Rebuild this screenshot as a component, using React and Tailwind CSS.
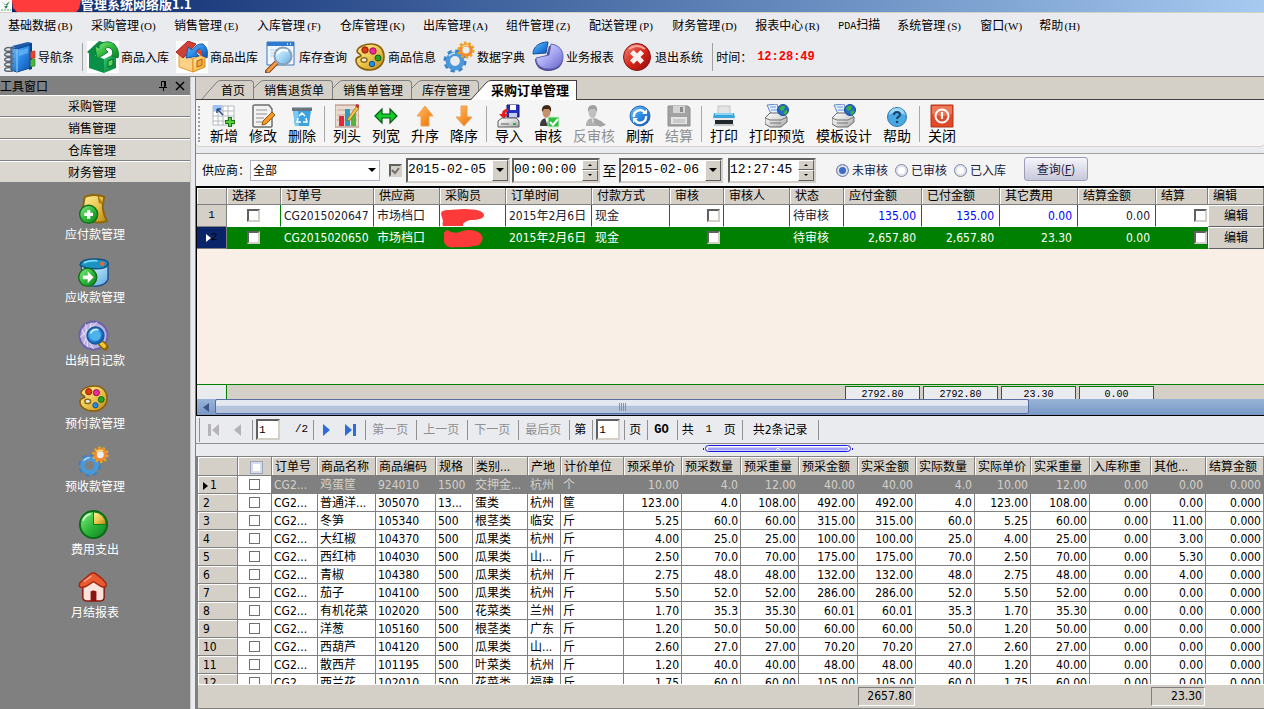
import React from "react";

const SANS = "font-['DejaVu_Sans_Condensed','Noto_Sans','Noto_Sans_CJK_SC',sans-serif]";
const CJK = "font-['Noto_Sans_CJK_SC',sans-serif]";
const MONO = "font-['Liberation_Mono','Noto_Sans_CJK_SC',monospace]";
const SERIF = "font-['Liberation_Serif','Noto_Sans_CJK_SC',serif]";

/* ---------- shared gradients ---------- */
function Gradients() {
  const g = (id, a, b, c) => (
    <linearGradient id={id} x1="0" y1="0" x2="1" y2="1">
      <stop offset="0" stopColor={a} />
      <stop offset="0.5" stopColor={b} />
      <stop offset="1" stopColor={c} />
    </linearGradient>
  );
  return (
    <svg className="absolute size-0" aria-hidden="true">
      <defs>
        {g("blue", "#7cc4fb", "#2b8be6", "#0f4fae")}
        {g("green", "#8ff08a", "#2fb93a", "#0b7d22")}
        {g("teal", "#3fd07c", "#17a04c", "#067a34")}
        {g("gold", "#fff3a0", "#ecc850", "#b98212")}
        {g("orange", "#ffc27a", "#f79630", "#e36f0c")}
        {g("lilac", "#e6e6ff", "#a9a9f2", "#6464c8")}
        {g("red", "#f28a7c", "#d8281c", "#8e0b08")}
        {g("cream", "#fff4cf", "#fbc860", "#f09a30")}
        {g("silver", "#ffffff", "#dcdcdc", "#a0a0a0")}
        {g("glass", "#f0fbff", "#a9d8f5", "#5ba9e0")}
      </defs>
    </svg>
  );
}

/* ---------- icons ---------- */
const Notebook = (p) => (
  <svg viewBox="0 0 32 32" {...p}>
    <path d="M8 5 24 1l4 1v4L13 8z" fill="#1d5cab" />
    <path d="M25 3l3-1v26l-3 1z" fill="#123f80" />
    <path d="M25 11l6-1v7l-6 1z" fill="#e8452a" stroke="#a82810" strokeWidth=".6" />
    <path d="M25 19l6-1v7l-6 1z" fill="#4cb83a" stroke="#24801c" strokeWidth=".6" />
    <path d="M7 6l6 2 13-4v23l-13 4-6-2z" fill="url(#blue)" stroke="#0d4794" />
    <path d="M13 8v23" stroke="#9ad0fb" />
    <path d="M15 10l9-3v5l-9 3z" fill="#7cc0f8" opacity=".6" />
    {[8, 13, 18, 23, 28].map((y) => (
      <path key={y} d={`M10 ${y}q-7-3-9 0t8 2`} fill="none" stroke="#5d6570" strokeWidth="1.4" />
    ))}
  </svg>
);
const BoxIn = (p) => (
  <svg viewBox="0 0 32 32" {...p}>
    <path fill="#fff" d="M0 0h32v32H0z" />
    <path d="M2 12 17 18v14L2 27z" fill="#079048" />
    <path d="M17 18l12-6v15l-12 5z" fill="url(#teal)" />
    <path d="M0 11 12 0l8 2L7 16z" fill="#0a8a42" />
    <path d="M12 4q8-6 15-1 6 6 4 14l-6-2q2-6-2-8-3-2-5 1l3 3-11 7-2-13 4 2z" fill="url(#green)" stroke="#0a8038" />
    <path d="M21 20l5-2v6l-5 2z" fill="#5fd65b" stroke="#056a2c" />
  </svg>
);
const BoxOut = (p) => (
  <svg viewBox="0 0 32 32" {...p}>
    <path fill="#fff" d="M0 0h32v32H0z" />
    <path d="M3 12 17 18v13L3 26z" fill="#fbd186" stroke="#e69a30" />
    <path d="M17 18l12-6v14l-12 5z" fill="url(#cream)" stroke="#d88a22" />
    <path d="M0 11 12 0l8 3L7 17z" fill="#d04036" stroke="#a5251e" />
    <path d="M22 7 31 14l-4 2-7-5z" fill="#e2472c" />
    <path d="M10 17 12 6l4 3q5-7 11-6 6 4 4 14l-5-3q1-6-3-6-2 0-3 4l3 3z" fill="url(#blue)" stroke="#1b57a8" />
    <path d="M21 20l5-2v6l-5 2z" fill="#f6a93c" stroke="#a9660e" />
  </svg>
);
const WindowSearch = (p) => (
  <svg viewBox="0 0 32 32" {...p}>
    <path d="M2 1h27v23H2z" fill="#eef5fc" stroke="#3b78b8" />
    <path d="M2 1h27v4H2z" fill="#2c7bd0" />
    <path d="M22 3h1M25 3h1" stroke="#fff" strokeWidth="1.5" />
    <path d="M5 9h7M5 12h5M5 15h4" stroke="#b9cfe4" />
    <path d="M12 21 2 31" stroke="#8a4a1c" strokeWidth="5" strokeLinecap="round" />
    <path d="M12 21 3 30" stroke="#f29a4c" strokeWidth="3" strokeLinecap="round" />
    <circle cx="18" cy="15" r="8.5" fill="url(#glass)" stroke="#8aa0b5" strokeWidth="2" />
    <path d="M12 13q4-6 11-3" stroke="#fff" strokeWidth="2" fill="none" />
  </svg>
);
const Palette = (p) => (
  <svg viewBox="0 0 32 32" {...p}>
    <path
      d="M17 3c9 0 13 6 13 13s-6 13-14 13S2 25 2 19c0-3 3-3 5-4 1-2-4-2-4-5 1-4 7-7 14-7z"
      fill="url(#gold)"
      stroke="#8a5f0a"
      strokeWidth="1.6"
    />
    <circle cx="11" cy="9" r="3.2" fill="#dc3c16" stroke="#8e1c06" />
    <circle cx="19" cy="10" r="3.2" fill="#ee2c96" stroke="#97125a" />
    <circle cx="24" cy="17" r="3" fill="#27a32a" stroke="#0f6414" />
    <circle cx="18" cy="23" r="2.700" fill="#1f8fe6" stroke="#0f5296" />
    <ellipse cx="10" cy="19" rx="3" ry="2.2" fill="#f4f0e0" stroke="#8a6a1c" strokeWidth="1.5" />
  </svg>
);
const Gears = (p) => (
  <svg viewBox="0 0 32 32" {...p}>
    <circle cx="12" cy="20" r="10.2" fill="none" stroke="#3a80c4" strokeWidth="2.800" strokeDasharray="4.400 3.610" />
    <circle cx="12" cy="20" r="7.2" fill="none" stroke="#4b98d8" strokeWidth="4.600" />
    <path d="M6 15a8 8 0 0 1 6-3" stroke="#b8defa" strokeWidth="1.500" fill="none" />
    <circle cx="23" cy="9" r="7.400" fill="none" stroke="#e9a818" strokeWidth="2.400" strokeDasharray="2.600 2.050" />
    <circle cx="23" cy="9" r="5.200" fill="#e8f0f6" stroke="#f58a2c" strokeWidth="3.200" />
    <path d="M19 6q3-3 7-1" stroke="#ffe27a" strokeWidth="1.300" fill="none" />
  </svg>
);
const Pie = (p) => (
  <svg viewBox="0 0 32 32" {...p}>
    <path d="M17 5c9 0 14 6 14 13s-6 12-15 12C8 30 3 25 3 18l11-2z" fill="#4c4c8e" />
    <path d="M19 3c8 1 12 6 12 13s-6 12-14 12S4 24 4 17l13-3z" fill="url(#lilac)" stroke="#6464b8" />
    <path d="M1 13C1 6 7 1 16 1l-2 11z" fill="url(#blue)" stroke="#134d9c" />
  </svg>
);
const Exit = (p) => (
  <svg viewBox="0 0 32 32" {...p}>
    <circle cx="16" cy="16" r="13.500" fill="url(#red)" stroke="#8a1410" />
    <path d="M8 8q8-6 16 0" stroke="#f6a69c" strokeWidth="2" fill="none" />
    <path d="M12.500 12.500l7 7M19.500 12.500l-7 7" stroke="#fff2ee" strokeWidth="5" strokeLinecap="square" />
  </svg>
);
const PageAdd = (p) => (
  <svg viewBox="0 0 32 32" {...p}>
    <path d="M7 3q10-4 20 0l-1 6q-1 3 0 8 1 6 4 11-9 3-19 0L4 20z" fill="url(#gold)" stroke="#8f6608" strokeWidth="2" />
    <path d="M21 2l1 7 5 1" fill="#b98c1c" stroke="#8f6608" />
    <circle cx="11" cy="21" r="9.300" fill="url(#green)" stroke="#10701a" strokeWidth="1.500" />
    <path d="M11 16.500v9M6.500 21h9" stroke="#fff" strokeWidth="3.400" />
  </svg>
);
const BinGo = (p) => (
  <svg viewBox="0 0 32 32" {...p}>
    <path d="M3 6l2 19q6 6 15 5 9-1 11-7V6z" fill="url(#glass)" stroke="#1c4f8c" strokeWidth="1.500" />
    <path d="M2 8q2-6 14-6 14 0 15 4 0 5-8 6-16 1-21-4z" fill="#1b93c4" stroke="#125080" strokeWidth="1.500" />
    <path d="M6 6q6-3 14-2" stroke="#7cdcf4" strokeWidth="2" fill="none" />
    <circle cx="25" cy="7" r="2.300" fill="#f0642c" />
    <circle cx="10" cy="21" r="9.300" fill="url(#green)" stroke="#10701a" strokeWidth="1.500" />
    <path d="M5 19h5v-4l6 6-6 6v-4H5z" fill="#fff" />
  </svg>
);
const GlobeSearch = (p) => (
  <svg viewBox="0 0 32 32" {...p}>
    <circle cx="16" cy="16" r="14.500" fill="#b9aee0" stroke="#6a5fa8" strokeWidth="2" />
    <path d="M4 10l12 20M2 18 20 2M8 4l2 24M14 3l-8 22" stroke="#efe4fb" fill="none" />
    <path d="M24 24l4 4" stroke="#8f6608" strokeWidth="7" strokeLinecap="round" />
    <path d="M24 24l3 3" stroke="#f4c630" strokeWidth="4" strokeLinecap="round" />
    <circle cx="18" cy="16" r="8.500" fill="url(#blue)" stroke="#125a9c" strokeWidth="2" />
    <circle cx="18" cy="16" r="5.500" fill="#4db4ea" />
    <path d="M13 14q2-5 8-4" stroke="#d8f4ff" strokeWidth="1.500" fill="none" />
  </svg>
);
const PieGreen = (p) => (
  <svg viewBox="0 0 32 32" {...p}>
    <circle cx="16" cy="16" r="14" fill="url(#green)" stroke="#0b6a16" strokeWidth="2" />
    <path d="M16 16V3a13 13 0 0 1 13 13z" fill="url(#gold)" stroke="#0f7a1a" />
    <path d="M5 12q3-6 8-7" stroke="#c8ffc4" strokeWidth="2" fill="none" />
  </svg>
);
const House = (p) => (
  <svg viewBox="0 0 32 32" {...p}>
    <path d="M5 14l11-8 11 8v12q0 4-5 4H10q-5 0-5-4z" fill="#fbe3dc" stroke="#8c1410" strokeWidth="1.500" />
    <path d="M14 1 2 11q-2 5 2 5l4-1 8-5 8 5q6 2 5-3-2-4-12-11z" fill="#e85a30" stroke="#a8260f" strokeWidth="1.500" />
    <path d="M6 10l8-6" stroke="#ffa080" strokeWidth="1.500" />
    <path d="M13 20q3-2 6 0v10h-6z" fill="#8c1410" />
  </svg>
);

const GridAdd = (p) => (
  <svg viewBox="0 0 24 24" {...p}>
    <path d="M1 2h21v19H1z" fill="#fff" stroke="#b4b8c0" />
    <path d="M1 7h21M1 12h21M1 17h21M6 2v19M11 2v19M16 2v19" stroke="#b4b8c0" />
    <path d="M1 1h9v6H1z" fill="#9cc4f8" />
    <path d="M5 5l6 6M5 5v4M5 5h4" stroke="#2c4c80" strokeWidth="1.500" fill="none" />
    <path d="M18 13v10M13 18h10" stroke="#1c7a1c" strokeWidth="4" />
    <path d="M18 14v8M14 18h8" stroke="#5cd03c" strokeWidth="2" />
  </svg>
);
const Edit = (p) => (
  <svg viewBox="0 0 24 24" {...p}>
    <path d="M2 2q0-1 2-1h14l3 4v17q0 1-1 1H3q-1 0-1-1z" fill="#f2f2f2" stroke="#6c6c6c" strokeWidth="1.500" />
    <path d="M5 6h11M5 10h11M5 14h8M5 18h6" stroke="#909090" />
    <path d="M21 8l3 3-9 9-4 1 1-4z" fill="#f59a24" stroke="#9a5408" />
  </svg>
);
const Trash = (p) => (
  <svg viewBox="0 0 24 24" {...p}>
    <path d="M3 6h18l-2 16H5z" fill="#3ba4e0" />
    <path d="M3 6h5l1 16H5z" fill="#7cc8f0" />
    <path d="M2 3h20v4H2z" fill="#6a7480" />
    <path d="M2 3h20v1H2z" fill="#a8b4c0" />
    <path d="M9 12l3-3 3 3M8 14l-1 4h4M16 14l1 4h-4" stroke="#fff" strokeWidth="1.500" fill="none" />
  </svg>
);
const Bars = (p) => (
  <svg viewBox="0 0 24 24" {...p}>
    <path d="M0 1h24v22H0z" fill="#eadbd0" stroke="#a88470" />
    <path d="M2 6h20M2 11h20M2 16h20" stroke="#c8a890" />
    <path d="M4 12h5v10H4z" fill="#e0283c" />
    <path d="M10 5h5v17h-5z" fill="#2c9cc0" />
    <path d="M16 9h5v13h-5z" fill="#54b43c" />
    <path d="M13 14l9-12 2 2-9 12-3 1z" fill="#ecc850" stroke="#9c6c10" strokeWidth=".8" />
    <path d="M21 1l3 2" stroke="#d03030" strokeWidth="3" />
  </svg>
);
const Wide = (p) => (
  <svg viewBox="0 0 24 24" {...p}>
    <path d="M1 12l7-7v5h8V5l7 7-7 7v-5H8v5z" fill="#14cc2c" stroke="#0b5c14" strokeWidth="1.200" />
  </svg>
);
const Up = (p) => (
  <svg viewBox="0 0 24 24" {...p}>
    <path d="M12 2l8 10h-4v10H8V12H4z" fill="url(#orange)" stroke="#f0a050" />
  </svg>
);
const Down = (p) => (
  <svg viewBox="0 0 24 24" {...p}>
    <path d="M12 22l8-9h-5V2H9v11H4z" fill="url(#orange)" stroke="#f0a050" />
  </svg>
);
const Import = (p) => (
  <svg viewBox="0 0 24 24" {...p}>
    <path d="M10 1h12v12H10z" fill="#2430c4" stroke="#10186c" />
    <path d="M13 1h6v5h-6z" fill="#fff" />
    <path d="M12 9h8v4h-8z" fill="#c4ccf4" />
    <path d="M11 5q-6 0-6 5H2l5 5 4-5H8q0-2 3-2z" fill="#e81c1c" />
    <path d="M5 14h14l3 3v6H1v-6z" fill="url(#silver)" stroke="#5c5c5c" />
    <path d="M4 20h8" stroke="#5c5c5c" />
    <path d="M16 20h3" stroke="#2cb42c" strokeWidth="2" />
  </svg>
);
const Person = ({ muted, ...p }) => (
  <svg viewBox="0 0 24 24" {...p}>
    <path d="M4 22q0-8 7-8t9 8z" fill={muted ? "#b0b0b0" : "#3c3c40"} />
    <path d="M9 13h4l-2 7z" fill={muted ? "#dcdcdc" : "#fff"} />
    <ellipse cx="10.500" cy="8" rx="4" ry="6" fill={muted ? "#c0c0c0" : "#c89068"} />
    <path d="M6 8q-1-7 5-7 5 0 4 7l-2-3H8z" fill={muted ? "#a0a0a0" : "#3c2818"} />
    {muted ? (
      <path d="M11 14l8 3 5 4-6 2-5-4z" fill="#a4a4a4" />
    ) : (
      <g>
        <path d="M12 13h11v10H12z" fill="#30c040" stroke="#d0f0d0" />
        <path d="M14 18l3 3 5-6" stroke="#fff" strokeWidth="2" fill="none" />
      </g>
    )}
  </svg>
);
const Refresh = (p) => (
  <svg viewBox="0 0 24 24" {...p}>
    <circle cx="12" cy="12" r="10" fill="url(#blue)" stroke="#2a66b8" />
    <path d="M6 13a6 6 0 0 1 11-4M18 12a6 6 0 0 1-11 4" stroke="#fff" strokeWidth="2.400" fill="none" />
    <path d="M14 10h5V5zM10 14H5v5z" fill="#fff" />
  </svg>
);
const Save = (p) => (
  <svg viewBox="0 0 24 24" {...p}>
    <path d="M1 2h20l2 2v18H1z" fill="#a2a2a2" stroke="#8c8c8c" />
    <path d="M6 2h12v7H6z" fill="#d4d4d4" />
    <path d="M13 3h3v5h-3z" fill="#8a8a8a" />
    <path d="M4 13h16v7H4z" fill="#e4e4e4" />
    <path d="M6 16h12M6 18h12" stroke="#b0b0b0" />
  </svg>
);
const Printer = (p) => (
  <svg viewBox="0 0 24 24" {...p}>
    <path d="M6 2h12v8H6z" fill="#e4e4e4" stroke="#c4c4c4" />
    <path d="M2 9h20l1 5H1z" fill="#3ba6dc" />
    <path d="M3 9h18v2H3z" fill="#8cd4f4" />
    <path d="M1 14h22v3H1z" fill="#e8e8e8" />
    <path d="M3 16h18v4H3z" fill="#20262c" />
    <path d="M2 21h20" stroke="#c4c8cc" strokeWidth="2" />
  </svg>
);
const PrintWeb = (p) => (
  <svg viewBox="0 0 24 24" {...p}>
    <path d="M2 1l10-1 3 10H6z" fill="#e4f0fc" stroke="#6484c4" />
    <path d="M5 3h6M6 6h6" stroke="#6c98e0" />
    <path d="M0 14l5-5h13l4 4v5l-6 5H5l-5-3z" fill="url(#silver)" stroke="#6a6a6a" />
    <path d="M0 14l5 2h11l6-3M5 19h11" stroke="#707070" fill="none" />
    <circle cx="18" cy="6" r="5.500" fill="#2468c8" stroke="#1a4c94" />
    <path d="M14 4q3-3 6-2l-1 4-3 1zM18 8l4-2q1 3-2 5z" fill="#38b43c" />
  </svg>
);
const Help = (p) => (
  <svg viewBox="0 0 24 24" {...p}>
    <circle cx="12" cy="13" r="9.500" fill="#4aa8e4" stroke="#2c78b4" />
    <path d="M4 11q7-6 16 0-1-7-8-7t-8 7z" fill="#9cd8f8" />
    <path d="M9 11q0-3 3-3t3 3q0 1-2 2-1 1-1 2" stroke="#1c4468" strokeWidth="2" fill="none" />
    <circle cx="12" cy="18" r="1.300" fill="#1c4468" />
  </svg>
);
const Power = (p) => (
  <svg viewBox="0 0 24 24" {...p}>
    <path d="M1 1h22v22H1z" fill="#e04a28" stroke="#b43418" />
    <path d="M2 2h20v8q-10 4-20 0z" fill="#ec7858" />
    <circle cx="12" cy="12" r="6.500" fill="none" stroke="#fff" strokeWidth="2" />
    <path d="M12 8v7" stroke="#fff" strokeWidth="2.200" />
  </svg>
);

/* ---------- data ---------- */
const MENU = [
  ["基础数据", "(B)"], ["采购管理", "(O)"], ["销售管理", "(E)"], ["入库管理", "(F)"], ["仓库管理", "(K)"],
  ["出库管理", "(A)"], ["组件管理", "(Z)"], ["配送管理", "(P)"], ["财务管理", "(D)"], ["报表中心", "(R)"],
  ["扫描", "", "PDA"], ["系统管理", "(S)"], ["窗口", "(W)"], ["帮助", "(H)"],
];
const MAIN_TOOLS = [
  [BoxIn, "商品入库"], [BoxOut, "商品出库"], [WindowSearch, "库存查询"], [Palette, "商品信息"],
  [Gears, "数据字典"], [Pie, "业务报表"], [Exit, "退出系统"],
];
const SIDE_ITEMS = [
  [PageAdd, "应付款管理"], [BinGo, "应收款管理"], [GlobeSearch, "出纳日记款"], [Palette, "预付款管理"],
  [Gears, "预收款管理"], [PieGreen, "费用支出"], [House, "月结报表"],
];
const TOOLS = [
  [GridAdd, "新增"], [Edit, "修改"], [Trash, "删除"], null,
  [Bars, "列头"], [Wide, "列宽"], [Up, "升序"], [Down, "降序"], null,
  [Import, "导入"], [Person, "审核"], [Person, "反审核", true], [Refresh, "刷新"], [Save, "结算", true], null,
  [Printer, "打印"], [PrintWeb, "打印预览"], [PrintWeb, "模板设计"], [Help, "帮助"], null,
  [Power, "关闭"],
];
const ORDER_COLS = [
  ["", 30], ["选择", 54], ["订单号", 93], ["供应商", 66], ["采购员", 66], ["订单时间", 86], ["付款方式", 78],
  ["审核", 54], ["审核人", 66], ["状态", 54], ["应付金额", 78], ["已付金额", 78], ["其它费用", 78],
  ["结算金额", 78], ["结算", 52], ["编辑", 56],
];
const ORDERS = [
  { no: "CG2015020647", sums: ["135.00", "135.00", "0.00"] },
  { no: "CG2015020650", sums: ["2,657.80", "2,657.80", "23.30"], active: true },
];
const BLOTS = [
  "M1 9Q1 5 8 5L24 4Q43 4 44 10 44 15 30 15 24 17 23 19V21H3Q2 19 3 16z",
  "M4 6Q6 1 11 5 18 7 22 4 34 1 41 7 45 12 39 18 28 21 16 20 6 22 4 15z",
];
const ITEM_COLS = [
  ["订单号", 46], ["商品名称", 58], ["商品编码", 60], ["规格", 37], ["类别...", 55], ["产地", 33], ["计价单位", 63],
  ["预采单价", 58], ["预采数量", 59], ["预采重量", 58], ["预采金额", 59], ["实采金额", 58], ["实际数量", 59],
  ["实际单价", 56], ["实采重量", 59], ["入库称重", 61], ["其他...", 55], ["结算金额", 58],
];
const ITEMS = [
  ["鸡蛋筐", "924010", "1500", "交押金...", "杭州", "个", "10.00", "4.0", "12.00", "40.00", "0.00"],
  ["普通洋...", "305070", "13...", "蛋类", "杭州", "筐", "123.00", "4.0", "108.00", "492.00", "0.00"],
  ["冬笋", "105340", "500", "根茎类", "临安", "斤", "5.25", "60.0", "60.00", "315.00", "11.00"],
  ["大红椒", "104370", "500", "瓜果类", "杭州", "斤", "4.00", "25.0", "25.00", "100.00", "3.00"],
  ["西红柿", "104030", "500", "瓜果类", "山...", "斤", "2.50", "70.0", "70.00", "175.00", "5.30"],
  ["青椒", "104380", "500", "瓜果类", "杭州", "斤", "2.75", "48.0", "48.00", "132.00", "4.00"],
  ["茄子", "104100", "500", "瓜果类", "杭州", "斤", "5.50", "52.0", "52.00", "286.00", "0.00"],
  ["有机花菜", "102020", "500", "花菜类", "兰州", "斤", "1.70", "35.3", "35.30", "60.01", "0.00"],
  ["洋葱", "105160", "500", "根茎类", "广东", "斤", "1.20", "50.0", "50.00", "60.00", "0.00"],
  ["西葫芦", "104120", "500", "瓜果类", "山...", "斤", "2.60", "27.0", "27.00", "70.20", "0.00"],
  ["散西芹", "101195", "500", "叶菜类", "杭州", "斤", "1.20", "40.0", "40.00", "48.00", "0.00"],
  ["西兰花", "102010", "500", "花菜类", "福建", "斤", "1.75", "60.0", "60.00", "105.00", "0.00"],
];

/* ---------- small controls ---------- */
const SUNKEN = "border-2 border-t-[#606060] border-l-[#606060] border-r-[#d4d0c8] border-b-[#d4d0c8]";
const RAISED = "border border-t-white border-l-white border-r-[#606060] border-b-[#606060] bg-[#d4d0c8]";

const Check = ({ label }) => (
  <input type="checkbox" aria-label={label} className={`block size-[13px] appearance-none bg-white ${SUNKEN}`} />
);
const FlatCheck = ({ label }) => (
  <input type="checkbox" aria-label={label} className="mx-auto block size-[11px] appearance-none border border-[#707070] bg-white" />
);
const Tri = ({ down, className }) => (
  <svg viewBox="0 0 8 4" className={className} aria-hidden="true">
    <path d={down ? "M0 0h8L4 4z" : "M0 4h8L4 0z"} fill="#000" />
  </svg>
);
function DateBox({ value, label }) {
  return (
    <div className={`flex h-[25px] w-[104px] shrink-0 bg-white ${SUNKEN}`}>
      <input aria-label={label} defaultValue={value} className={`min-w-0 flex-1 text-[13px] ${MONO}`} />
      <button type="button" aria-label={`${label} 下拉`} className={`flex w-4 items-center justify-center ${RAISED}`}>
        <Tri down className="h-1 w-2" />
      </button>
    </div>
  );
}
function TimeBox({ value, label }) {
  return (
    <div className={`flex h-[25px] w-[88px] shrink-0 bg-white ${SUNKEN}`}>
      <input aria-label={label} defaultValue={value} className={`min-w-0 flex-1 text-[13px] ${MONO}`} />
      <div className="flex w-4 flex-col">
        <button type="button" aria-label={`${label} 增加`} className={`flex flex-1 items-center justify-center ${RAISED}`}>
          <Tri className="h-0.5 w-1" />
        </button>
        <button type="button" aria-label={`${label} 减少`} className={`flex flex-1 items-center justify-center ${RAISED}`}>
          <Tri down className="h-0.5 w-1" />
        </button>
      </div>
    </div>
  );
}

/* ---------- header ---------- */
function Header() {
  return (
    <header className="shrink-0">
      <div className="flex h-3 items-start overflow-hidden bg-linear-to-r from-[#0a246a] to-[#a6caf0]">
        <svg viewBox="0 0 12 12" className="h-3 w-3 shrink-0 bg-white" aria-hidden="true">
          <path d="M1 1l4 4 5-4-3 5zM4 6l2 3 2-3" fill="#2a8a5a" />
          <path d="M1 10h10" stroke="#4ca070" strokeDasharray="2 1" />
        </svg>
        <svg viewBox="0 0 69 12" className="h-3 w-[69px] shrink-0" aria-hidden="true">
          <path d="M0 0h69l-2 9-3 3H5L1 8z" fill="#ff3b3b" />
        </svg>
        <h1 className="text-[13px] leading-[8px] font-bold whitespace-nowrap text-white">管理系统网络版1.1</h1>
      </div>
      <nav className="flex h-[26px] items-center gap-[17px] overflow-hidden border-t border-[#d4d0c8] pl-2 whitespace-nowrap">
        {MENU.map(([t, k, pre]) => (
          <button key={t + k} type="button" className="flex shrink-0 items-baseline leading-4">
            {pre && <span className={`text-[10px] ${MONO}`}>{pre}</span>}
            {t}
            {k && <span className={`w-[18px] text-center text-[11px] ${SERIF}`}>{k}</span>}
          </button>
        ))}
      </nav>
      <div className="flex h-[38px] items-center overflow-hidden pl-1 whitespace-nowrap">
        <button type="button" className="flex shrink-0 items-center gap-0.5">
          <Notebook className="size-8" />
          导航条
        </button>
        <i className="mr-1 ml-2 h-7 w-px shrink-0 bg-[#a0a0a0]" />
        {MAIN_TOOLS.map(([Icon, t]) => (
          <button key={t} type="button" className="mr-[7px] flex shrink-0 items-center gap-0.5">
            <Icon className="size-8" />
            {t}
          </button>
        ))}
        <i className="mr-[3px] ml-0.5 h-7 w-px shrink-0 bg-[#a0a0a0]" />
        <span className="w-[41px] shrink-0">时间：</span>
        <time className={`text-[12px] font-bold text-[#ff0000] ${MONO}`}>12:28:49</time>
      </div>
    </header>
  );
}

/* ---------- side panel ---------- */
function Sidebar() {
  return (
    <aside className="flex w-[191px] shrink-0 flex-col border-r border-[#c8c8c8] bg-[#808080]">
      <div className="flex h-[18px] shrink-0 items-center leading-4">
        <h2 className="flex-1">工具窗口</h2>
        <button type="button" aria-label="固定" className="mr-1.5">
          <svg viewBox="0 0 10 12" className="h-3 w-2.5">
            <path d="M3.500 1.500h4v5M3.500 1.500v5M1 7.500h8M5.500 7v4M6.500 1v6" stroke="#000" fill="none" />
          </svg>
        </button>
        <button type="button" aria-label="关闭工具窗口" className="mr-1">
          <svg viewBox="0 0 12 12" className="size-3">
            <path d="M2 2l8 8M10 2l-8 8" stroke="#000" strokeWidth="1.500" />
          </svg>
        </button>
      </div>
      {["采购管理", "销售管理", "仓库管理", "财务管理"].map((t) => (
        <button
          key={t}
          type="button"
          className="h-[22px] shrink-0 border-t border-b border-t-white border-b-[#808080] bg-[#dad7d0] pr-1.5 leading-4"
        >
          {t}
        </button>
      ))}
      <ul className="flex flex-col gap-[15px] pt-[11px] text-white">
        {SIDE_ITEMS.map(([Icon, t]) => (
          <li key={t}>
            <a href="#" className="flex h-12 flex-col items-center gap-px pr-1">
              <Icon className="size-[31px]" />
              <span className="pl-1 leading-4">{t}</span>
            </a>
          </li>
        ))}
      </ul>
    </aside>
  );
}

/* ---------- tabs ---------- */
function Tab({ children, first, active }) {
  if (active)
    return (
      <button type="button" role="tab" aria-selected="true" className="relative -mb-px -ml-2 flex h-5 items-stretch text-[13px] font-bold">
        <svg viewBox="0 0 20 20" className="h-5 w-5" aria-hidden="true">
          <path d="M0 20 15 3Q17 0 20 0V20z" fill="#fff" />
          <path d="M0 19.500 15 3Q17 .5 20 .5" fill="none" stroke="#404040" />
        </svg>
        <span className="border-t border-r border-[#404040] bg-white pr-[7px] leading-[17px]">{children}</span>
      </button>
    );
  return (
    <button type="button" role="tab" aria-selected="false" className="flex h-[19px] items-stretch">
      {first ? (
        <svg viewBox="0 0 19 19" className="h-[19px] w-[19px]" aria-hidden="true">
          <path d="M0 19 14 3Q16 .5 19 .5" fill="none" stroke="#808080" />
        </svg>
      ) : (
        <svg viewBox="0 0 10 19" className="h-[19px] w-2.5" aria-hidden="true">
          <path d="M0 8 5 3Q7 .5 10 .5" fill="none" stroke="#808080" />
        </svg>
      )}
      <span className="rounded-tr-sm border-t border-r border-[#808080] pr-2 leading-[17px]">{children}</span>
    </button>
  );
}

/* ---------- toolbar and filter ---------- */
function Toolbar() {
  return (
    <div className="flex h-[47px] shrink-0 items-start overflow-hidden rounded-b border-b border-[#d8d4cc] bg-[#f5f5f5] pt-1 pl-0.5 text-sm">
      <i className="mt-0.5 mr-[5px] h-9 shrink-0 border-l-2 border-dotted border-[#a0a0a0]" />
      {TOOLS.map((tool, i) => {
        if (!tool) return <i key={i} className="mt-0.5 mr-[3px] ml-0.5 h-9 w-px shrink-0 bg-[#a8a8a8]" />;
        const [Icon, t, muted] = tool;
        const extra = Icon === Person && muted ? { muted: true } : {};
        return (
          <button
            key={t}
            type="button"
            disabled={Boolean(muted)}
            className={`flex shrink-0 flex-col items-center pr-1.5 pl-[5px] leading-[14px] whitespace-nowrap ${muted ? "text-[#909090]" : "text-black"}`}
          >
            <Icon className="size-6" {...extra} />
            {t}
          </button>
        );
      })}
    </div>
  );
}

function Filter() {
  return (
    <form className="mt-1.5 flex h-[33px] shrink-0 items-center overflow-hidden border-t border-[#a0a0a0] bg-[#f4f4f5] pl-1.5 whitespace-nowrap" onSubmit={(e) => e.preventDefault()}>
      <label htmlFor="supplier" className="w-12 shrink-0">供应商：</label>
      <div className="relative w-[130px] shrink-0">
        <select id="supplier" className="h-[21px] w-full appearance-none border border-[#b0b0c0] bg-white pl-0.5">
          <option>全部</option>
        </select>
        <Tri down className="pointer-events-none absolute top-2 right-1 h-1 w-2" />
      </div>
      <label className="relative mr-1 ml-[9px] block size-[13px] shrink-0">
        <input type="checkbox" defaultChecked aria-label="按时间" className={`block size-[13px] appearance-none bg-[#d4d0c8] ${SUNKEN}`} />
        <svg viewBox="0 0 13 13" className="pointer-events-none absolute inset-0 size-[13px]" aria-hidden="true">
          <path d="M3 6l3 3 4-5" fill="none" stroke="#707070" strokeWidth="2" />
        </svg>
      </label>
      <DateBox value="2015-02-05" label="开始日期" />
      <span className="w-0.5 shrink-0" />
      <TimeBox value="00:00:00" label="开始时间" />
      <span className="w-[19px] shrink-0 text-center text-sm">至</span>
      <DateBox value="2015-02-06" label="结束日期" />
      <span className="w-[5px] shrink-0" />
      <TimeBox value="12:27:45" label="结束时间" />
      <div className="ml-5 flex shrink-0 gap-[7px] text-[#202040]">
        {["未审核", "已审核", "已入库"].map((t, i) => (
          <label key={t} className="flex w-[52px] items-center gap-[3px]">
            <input
              type="radio"
              name="state"
              defaultChecked={i === 0}
              className="size-[13px] shrink-0 appearance-none rounded-full border border-[#7c84a0] bg-white shadow-[inset_0_0_0_2px_#e0e2ec] checked:bg-[#3c6cc8]"
            />
            {t}
          </label>
        ))}
      </div>
      <button type="submit" className="mb-0.5 ml-[18px] h-6 w-16 shrink-0 rounded-[3px] border border-[#9c9cb8] bg-linear-to-b from-[#f4f4fa] to-[#c8c8dc] text-[#202040]">
        查询(<u>F</u>)
      </button>
    </form>
  );
}

/* ---------- order grid ---------- */
function OrderGrid() {
  return (
    <section className="flex h-[230px] shrink-0 flex-col border-t-2 border-b border-l border-black bg-[#faefe6]">
      <div className="min-h-0 flex-1 overflow-hidden">
        <table className="w-full table-fixed border-separate border-spacing-0 whitespace-nowrap">
          <colgroup>
            {ORDER_COLS.map(([t, w], i) => <col key={i} style={{ width: w }} />)}
          </colgroup>
          <thead>
            <tr className="h-[17px] bg-[#d4d0c8] text-left">
              {ORDER_COLS.map(([t], i) => (
                <th key={i} className="overflow-hidden border-r border-b border-[#808080] p-0 pl-[5px] leading-4 font-normal shadow-[inset_1px_1px_0_#fff]">{t}</th>
              ))}
            </tr>
          </thead>
          <tbody>
            {ORDERS.map((o, r) => {
              const base = `border-r border-b overflow-hidden border-[#008000] ${o.active ? "" : "border-b-white"}`;
              const mark = `${base} p-0`;
              const cell = `${base} px-[3px] pt-0.5 pb-0 leading-[19px]`;
              const sum = `${base} pt-0.5 pr-[5px] pb-0 pl-0 text-right leading-[19px]`;
              return (
                <tr key={o.no} className={`h-[22px] ${o.active ? "bg-[#008000] text-white" : "bg-white text-[#202030]"}`}>
                  <th className={`border-r border-b border-[#808080] p-0 text-[11px] leading-[21px] font-normal ${MONO} ${o.active ? "bg-[#0a246a] text-black" : "bg-[#d4d0c8] text-black"}`}>
                    <span className="flex items-center justify-center">
                      {o.active && (
                        <svg viewBox="0 0 5 8" className="h-2 w-[5px]" aria-hidden="true"><path d="M0 0l5 4-5 4z" fill="#fff" /></svg>
                      )}
                      {r + 1}
                    </span>
                  </th>
                  <td className={mark}><div className="flex justify-center"><Check label={`选择 ${o.no}`} /></div></td>
                  <td className={cell}>{o.no}</td>
                  <td className={cell}>市场档口</td>
                  <td className={mark}>
                    <svg viewBox="0 0 65 21" className="block h-[21px] w-full" preserveAspectRatio="xMinYMid" aria-hidden="true">
                      <path d={BLOTS[r]} fill="#fc3a3a" />
                    </svg>
                  </td>
                  <td className={cell}>2015年2月6日</td>
                  <td className={cell}>现金</td>
                  <td className={mark}><div className="flex justify-end pr-[3px]"><Check label={`审核 ${o.no}`} /></div></td>
                  <td className={mark} />
                  <td className={cell}>待审核</td>
                  {o.sums.map((s, i) => <td key={i} className={`${sum} ${o.active ? "" : "text-[#0000ff]"}`}>{s}</td>)}
                  <td className={sum}>0.00</td>
                  <td className={`${mark} border-r-0`}><div className="flex justify-end pr-px"><Check label={`结算 ${o.no}`} /></div></td>
                  <td className="p-0">
                    <button type="button" className={`block h-[22px] w-full text-black ${RAISED}`}>编辑</button>
                  </td>
                </tr>
              );
            })}
          </tbody>
        </table>
      </div>
      <div className="h-[15px] shrink-0 overflow-hidden border-t border-[#008000] bg-[#d4d0c8]">
        <table className={`w-full table-fixed border-separate border-spacing-0 text-[10px] ${MONO}`}>
          <colgroup>
            {ORDER_COLS.map(([t, w], i) => <col key={i} style={{ width: w }} />)}
          </colgroup>
          <tbody>
            <tr>
              <td className="h-4 border-r border-[#008000] bg-[#eaebef] p-0" />
              <td colSpan={9} className="p-0" />
              {["2792.80", "2792.80", "23.30", "0.00"].map((s, i) => (
                <td key={i} className="p-0 pt-px pr-0.5 pl-px text-center">
                  <div className="h-5 border border-[#008000] bg-[#eaebef] leading-[15px]">{s}</div>
                </td>
              ))}
              <td colSpan={2} className="p-0" />
            </tr>
          </tbody>
        </table>
      </div>
      <div className="flex h-4 shrink-0 bg-linear-to-b from-[#98b4d8] to-[#7898c4]">
        <button type="button" aria-label="向左滚动" className="flex w-[18px] items-center justify-center">
          <svg viewBox="0 0 6 9" className="h-[9px] w-1.5"><path d="M6 0v9L0 4.500z" fill="#3c5488" /></svg>
        </button>
        <div className="mb-px flex w-[76.3%] items-center justify-center gap-px rounded-xs border border-[#5c6ca0] bg-linear-to-b from-[#e4e8f0] from-40% to-[#b4c4dc] to-50%">
          {[0, 1, 2, 3].map((i) => <i key={i} className="h-2 w-px bg-[#8090a8]" />)}
        </div>
      </div>
    </section>
  );
}

/* ---------- pager ---------- */
const Bar = () => <i className="mr-1.5 ml-2 h-5 w-px shrink-0 bg-[#909090]" />;
function Pager() {
  const box = `h-[21px] w-6 shrink-0 bg-white pl-px text-[11px] ${MONO} ${SUNKEN}`;
  return (
    <div className="flex h-[27px] shrink-0 items-center overflow-hidden pl-[3px] whitespace-nowrap">
      <i className="mr-2 h-6 w-px shrink-0 bg-[#909090]" />
      <button type="button" disabled aria-label="首条" className="mr-[15px] shrink-0">
        <svg viewBox="0 0 11 12" className="h-3 w-[11px]"><path d="M0 0h3v12H0zM11 0v12L4 6z" fill="#b4b4b8" /></svg>
      </button>
      <button type="button" disabled aria-label="上一条" className="mr-[3px] shrink-0">
        <svg viewBox="0 0 7 12" className="h-3 w-[7px]"><path d="M7 0v12L0 6z" fill="#b4b4b8" /></svg>
      </button>
      <i className="mr-[3px] ml-2 h-5 w-px shrink-0 bg-[#909090]" />
      <input aria-label="当前记录" defaultValue="1" className={box} />
      <span className={`ml-[15px] text-[11px] ${MONO}`}>/2</span>
      <i className="mr-[9px] ml-[5px] h-5 w-px shrink-0 bg-[#909090]" />
      <button type="button" aria-label="下一条" className="mr-[15px] shrink-0">
        <svg viewBox="0 0 7 12" className="h-3 w-[7px]"><path d="M0 0v12l7-6z" fill="#2c6cdc" /></svg>
      </button>
      <button type="button" aria-label="末条" className="mr-px shrink-0">
        <svg viewBox="0 0 11 12" className="h-3 w-[11px]"><path d="M8 0h3v12H8zM0 0v12l7-6z" fill="#2c6cdc" /></svg>
      </button>
      {["第一页", "上一页", "下一页", "最后页"].map((t) => (
        <React.Fragment key={t}>
          <Bar />
          <button type="button" disabled className="shrink-0 text-[#909090]">{t}</button>
        </React.Fragment>
      ))}
      <i className="mr-1 ml-2 h-5 w-px shrink-0 bg-[#909090]" />
      <span>第</span>
      <i className="mr-[3px] ml-1.5 h-5 w-px shrink-0 bg-[#909090]" />
      <input aria-label="页码" defaultValue="1" className={box} />
      <i className="mr-1 ml-1 h-5 w-px shrink-0 bg-[#909090]" />
      <span>页</span>
      <i className="mr-1.5 ml-1.5 h-5 w-px shrink-0 bg-[#909090]" />
      <button type="button" className={`shrink-0 text-[12px] font-bold ${MONO}`}>GO</button>
      <i className="mr-1 ml-2 h-5 w-px shrink-0 bg-[#909090]" />
      <span className="flex w-[54px] shrink-0 items-center justify-between">
        <span>共</span><span className={`text-[11px] ${MONO}`}>1</span><span>页</span>
      </span>
      <i className="mr-2.5 ml-1.5 h-5 w-px shrink-0 bg-[#909090]" />
      <span>共2条记录</span>
      <i className="ml-2.5 h-5 w-px shrink-0 bg-[#909090]" />
    </div>
  );
}

function Splitter() {
  return (
    <div className="flex h-[13px] shrink-0 items-start justify-center border-t border-[#909090] pl-24">
      <svg viewBox="0 0 150 8" className="mt-px h-2 w-[150px]" aria-hidden="true">
        <rect x="2.500" y=".5" width="145" height="6" rx="3" fill="#fff" stroke="#1818e0" />
        <rect x="5" y="2.500" width="140" height="3" fill="#a0a0f8" />
        <path d="M73 5l2-2 2 2" stroke="#fff" fill="none" />
        <path d="M.5 3v2M149.500 3v2" stroke="#1818e0" />
      </svg>
    </div>
  );
}

/* ---------- item grid ---------- */
function ItemCols() {
  return (
    <colgroup>
      <col style={{ width: 40 }} />
      <col style={{ width: 34 }} />
      {ITEM_COLS.map(([t, w]) => <col key={t} style={{ width: w }} />)}
    </colgroup>
  );
}
function ItemGrid() {
  const head = "overflow-hidden border-r border-b border-[#808080] bg-[#d4d0c8] pt-0.5 pr-0 pb-0 pl-[3px] text-left leading-4 font-normal shadow-[inset_1px_1px_0_#fff]";
  return (
    <section className="flex min-h-0 flex-1 flex-col border-t border-b border-l-2 border-[#808080] bg-white">
      <div className="min-h-0 flex-1 overflow-hidden">
        <table className="w-full table-fixed border-separate border-spacing-0 whitespace-nowrap">
          <ItemCols />
          <thead>
            <tr className="h-[19px]">
              <th className={head} />
              <th className={head}>
                <input type="checkbox" aria-label="全选" className="mx-auto block size-[13px] appearance-none border border-[#9ca4bc] bg-white shadow-[inset_0_0_0_2px_#d8dce8]" />
              </th>
              {ITEM_COLS.map(([t]) => <th key={t} className={head}>{t}</th>)}
            </tr>
          </thead>
          <tbody>
            {ITEMS.map((it, r) => {
              const [name, code, spec, kind, place, unit, price, qty, weight, sum, other] = it;
              const left = ["CG2...", name, code, spec, kind, place, unit];
              const right = [price, qty, weight, sum, sum, qty, price, weight, "0.00", other, "0.000"];
              const line = "overflow-hidden border-r border-b border-[#808080]";
              const td = `${line} pt-0.5 pb-0 leading-[15px]`;
              return (
                <tr key={code} className={`h-[18px] ${r === 0 ? "bg-[#808080] text-[#d4d0c8]" : "bg-white text-black"}`}>
                  <th className={`${td} bg-[#d4d0c8] pr-0 pl-[5px] text-left font-normal text-black shadow-[inset_1px_1px_0_#fff]`}>
                    <span className="flex items-center gap-0.5">
                      {r === 0 && (
                        <svg viewBox="0 0 5 8" className="h-2 w-[5px]" aria-hidden="true"><path d="M0 0l5 4-5 4z" fill="#000" /></svg>
                      )}
                      {r + 1}
                    </span>
                  </th>
                  <td className={`${line} bg-white p-0`}><FlatCheck label={`选择 ${name}`} /></td>
                  {left.map((v, i) => <td key={i} className={`${td} pr-0 pl-0.5`}>{v}</td>)}
                  {right.map((v, i) => <td key={i} className={`${td} pr-0.5 pl-0 text-right`}>{v}</td>)}
                </tr>
              );
            })}
          </tbody>
        </table>
      </div>
      <div className="h-6 shrink-0 overflow-hidden border-t border-white bg-[#d4d0c8]">
        <table className="w-full table-fixed border-separate border-spacing-0">
          <ItemCols />
          <tbody>
            <tr>
              <td colSpan={13} className="p-0" />
              <td className="p-0 pt-0.5 pr-px">
                <div className="h-[19px] border border-t-[#808080] border-r-white border-b-white border-l-[#808080] pr-0.5 text-right leading-[17px]">2657.80</div>
              </td>
              <td colSpan={4} className="p-0" />
              <td className="p-0 pt-0.5 pr-px">
                <div className="h-[19px] border border-t-[#808080] border-r-white border-b-white border-l-[#808080] pr-0.5 text-right leading-[17px]">23.30</div>
              </td>
              <td className="p-0" />
            </tr>
          </tbody>
        </table>
      </div>
    </section>
  );
}

export default function App() {
  return (
    <div className={`flex h-screen w-full flex-col overflow-hidden bg-[#eaebef] text-[12px] text-black ${CJK}`}>
      <Gradients />
      <Header />
      <div className="flex min-h-0 flex-1 border-t border-[#808080]">
        <Sidebar />
        <main className="ml-1 flex min-w-0 flex-1 flex-col border-l border-[#808080]">
          <div role="tablist" className="flex h-[23px] shrink-0 items-end border-b border-[#404040] bg-[#d4d0c8] pl-1.5 whitespace-nowrap">
            <Tab first>首页</Tab>
            <Tab>销售退货单</Tab>
            <Tab>销售单管理</Tab>
            <Tab>库存管理</Tab>
            <Tab active>采购订单管理</Tab>
          </div>
          <Toolbar />
          <Filter />
          <div className={`flex min-h-0 flex-1 flex-col ${SANS}`}>
            <OrderGrid />
            <Pager />
            <Splitter />
            <ItemGrid />
          </div>
        </main>
      </div>
    </div>
  );
}
